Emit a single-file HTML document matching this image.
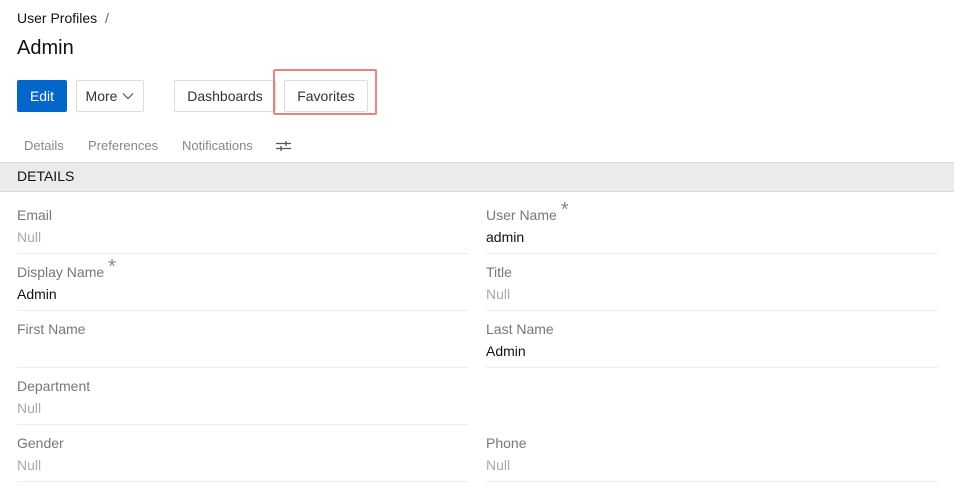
<!DOCTYPE html>
<html><head><style>
*{margin:0;padding:0;box-sizing:border-box}
body{width:954px;height:493px;background:#fff;font-family:"Liberation Sans",Arial,sans-serif;position:relative;overflow:hidden;color:#222}
.a{position:absolute;white-space:nowrap}
.btn{position:absolute;height:32px;border:1px solid #ddd;border-radius:2px;font-size:14px;color:#333;display:flex;align-items:center;justify-content:center;background:#fff}
.lbl{position:absolute;font-size:14px;color:#777;white-space:nowrap}
.val{position:absolute;font-size:14px;color:#111}
.nul{color:#aaa}
.sep{position:absolute;height:1px;background:#eee}
.star{position:absolute;font-size:20px;color:#888;top:-7px;margin-left:4px;line-height:20px}
</style></head><body>
<div class="a" style="left:17px;top:10px;font-size:14px;color:#111">User Profiles <span style="color:#666;margin-left:4px">/</span></div>
<div class="a" style="left:17px;top:37px;font-size:20px;color:#111">Admin</div>
<div class="btn" style="left:17px;top:80px;width:50px;background:#0466c8;border-color:#0466c8;color:#fff">Edit</div>
<div class="btn" style="left:76px;top:80px;width:68px">More <svg width="12" height="8" style="margin-left:5px" viewBox="0 0 12 8"><path d="M1 1.5L6 6.5L11 1.5" fill="none" stroke="#555" stroke-width="1.2"/></svg></div>
<div class="btn" style="left:174px;top:80px;width:102px">Dashboards</div>
<div class="btn" style="left:284px;top:80px;width:84px">Favorites</div>
<div class="a" style="left:273px;top:69px;width:104px;height:46px;border:2px solid #f08080;border-radius:2px"></div>
<div class="a" style="left:24px;top:138px;font-size:13px;color:#888">Details</div>
<div class="a" style="left:88px;top:138px;font-size:13px;color:#888">Preferences</div>
<div class="a" style="left:182px;top:138px;font-size:13px;color:#888">Notifications</div>
<svg class="a" style="left:276px;top:140px" width="15" height="12" viewBox="0 0 15 12"><path d="M0 3.5H15M0 8.5H15M10 1V6M5 6V11" stroke="#555" stroke-width="1.3" fill="none"/></svg>
<div class="a" style="left:0;top:162px;width:954px;height:30px;background:#ebebeb;border-top:1px solid #d8d8d8;border-bottom:1px solid #d8d8d8"></div>
<div class="a" style="left:17px;top:168px;font-size:14px;color:#111">DETAILS</div>

<div class="lbl" style="left:17px;top:207px">Email</div><div class="val nul" style="left:17px;top:229px">Null</div>
<div class="lbl" style="left:486px;top:207px">User Name<span class="star">*</span></div><div class="val" style="left:486px;top:229px">admin</div>
<div class="lbl" style="left:17px;top:264px">Display Name<span class="star">*</span></div><div class="val" style="left:17px;top:286px">Admin</div>
<div class="lbl" style="left:486px;top:264px">Title</div><div class="val nul" style="left:486px;top:286px">Null</div>
<div class="lbl" style="left:17px;top:321px">First Name</div>
<div class="lbl" style="left:486px;top:321px">Last Name</div><div class="val" style="left:486px;top:343px">Admin</div>
<div class="lbl" style="left:17px;top:378px">Department</div><div class="val nul" style="left:17px;top:400px">Null</div>
<div class="lbl" style="left:17px;top:435px">Gender</div><div class="val nul" style="left:17px;top:457px">Null</div>
<div class="lbl" style="left:486px;top:435px">Phone</div><div class="val nul" style="left:486px;top:457px">Null</div>

<div class="sep" style="left:17px;top:253px;width:451px"></div><div class="sep" style="left:486px;top:253px;width:452px"></div>
<div class="sep" style="left:17px;top:310px;width:451px"></div><div class="sep" style="left:486px;top:310px;width:452px"></div>
<div class="sep" style="left:17px;top:367px;width:451px"></div><div class="sep" style="left:486px;top:367px;width:452px"></div>
<div class="sep" style="left:17px;top:424px;width:451px"></div>
<div class="sep" style="left:17px;top:481px;width:451px"></div><div class="sep" style="left:486px;top:481px;width:452px"></div>
</body></html>
